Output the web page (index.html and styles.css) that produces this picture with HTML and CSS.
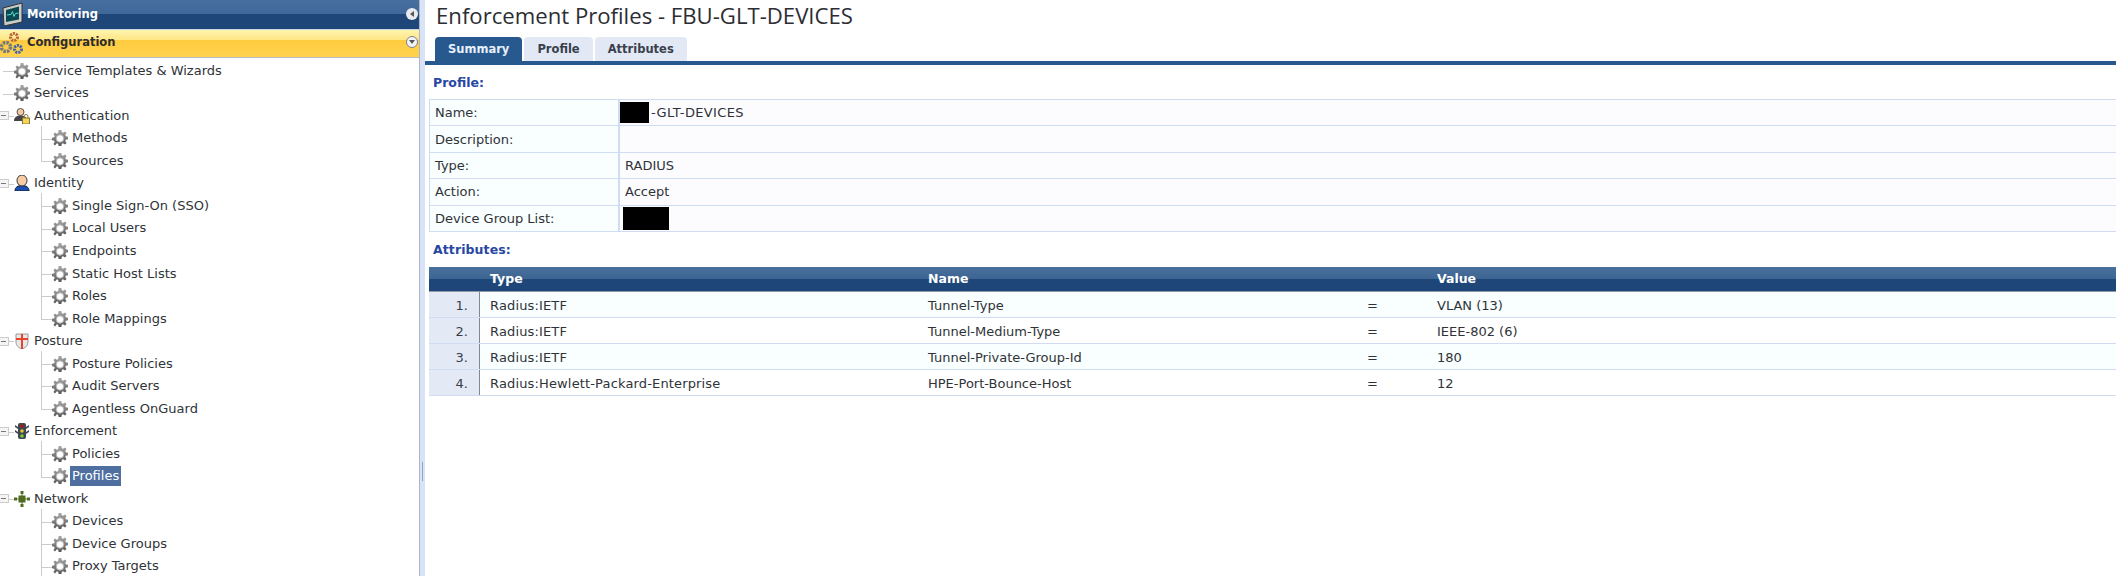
FILE: index.html
```html
<!DOCTYPE html>
<html lang="en">
<head>
<meta charset="utf-8">
<title>Enforcement Profiles</title>
<link rel="stylesheet" href="styles.css">
</head>
<body>
<svg class="defs" width="0" height="0">
  <defs>
    <linearGradient id="gearfill" x1="0" y1="0" x2="0" y2="1">
      <stop offset="0" stop-color="#a9a9a9"/>
      <stop offset="1" stop-color="#565656"/>
    </linearGradient>
    <symbol id="gear" viewBox="0 0 16 16">
      <path fill="url(#gearfill)" d="M6.600 0h2.800l.4 2.200 1.300.6L13 1.600l1.500 1.500-1.200 1.900.5 1.300 2.200.4v2.600l-2.200.4-.5 1.300 1.200 1.900-1.500 1.500-1.900-1.200-1.300.6-.4 2.100H6.600l-.4-2.100-1.300-.6L3 15.400l-1.500-1.500 1.200-1.900-.5-1.300L0 10.300V7.700l2.200-.4.5-1.300L1.500 4.100 3 2.600l1.900 1.200 1.300-.6z"/>
      <circle cx="8" cy="8.500" r="3.700" fill="#fff" stroke="#b5b5b5"/>
    </symbol>
  </defs>
</svg>
<div class="app">
  <aside class="sidebar">
    <div class="accordion monitoring">
      <svg class="acc-icon" width="22" height="24" viewBox="0 0 22 24"><path d="M1 6l19-5v19L2 24z" fill="#c9ccc9" stroke="#333"/><path d="M4 8l13-3.500v13L4 20z" fill="#0c4a52"/><path d="M5 13l4-.5 1.500-3 1.500 5 1.500-3 3-.5" fill="none" stroke="#4fe0d0"/></svg>
      <span class="acc-label">Monitoring</span>
      <span class="acc-toggle"><span class="arrow-left"></span></span>
    </div>
    <div class="accordion configuration">
      <svg class="acc-icon cfg" width="24" height="28" viewBox="0 0 24 28">
        <circle cx="14" cy="7" r="3.500" fill="none" stroke="#b8623a" stroke-width="3" stroke-dasharray="2 1"/>
        <circle cx="6" cy="17" r="4.500" fill="none" stroke="#77777c" stroke-width="3.500" stroke-dasharray="2.500 1"/>
        <circle cx="18" cy="19" r="3.500" fill="none" stroke="#3c62a8" stroke-width="3" stroke-dasharray="2 1"/>
      </svg>
      <span class="acc-label">Configuration</span>
      <span class="acc-toggle open"><span class="arrow-down"></span></span>
    </div>
    <ul class="tree">
      <li class="row top leaf"><svg class="ico"><use href="#gear"/></svg><span class="lbl">Service Templates &amp; Wizards</span></li>
      <li class="row top leaf"><svg class="ico"><use href="#gear"/></svg><span class="lbl">Services</span></li>
      <li class="row top"><span class="exp"></span><svg class="ico" viewBox="0 0 16 16"><circle cx="6.500" cy="4" r="3.500" fill="#f6c9a0" stroke="#555"/><path d="M0 13c0-4 3-5.500 6.500-5.500S13 9 13 13z" fill="#444"/><rect x="8.500" y="10" width="7" height="6" fill="#f3d55a" stroke="#8a7a30"/><path d="M10 10V8.500a2 2 0 0 1 4 0V10" fill="none" stroke="#8a7a30"/></svg><span class="lbl">Authentication</span></li>
      <li class="row child"><svg class="ico"><use href="#gear"/></svg><span class="lbl">Methods</span></li>
      <li class="row child last"><svg class="ico"><use href="#gear"/></svg><span class="lbl">Sources</span></li>
      <li class="row top"><span class="exp"></span><svg class="ico" viewBox="0 0 16 16"><path d="M1 16c0-4 3-5.500 7-5.500s7 1.500 7 5.500z" fill="#1d4fb0" stroke="#123"/><ellipse cx="8" cy="5.500" rx="5" ry="5.500" fill="#f8cda6" stroke="#333"/></svg><span class="lbl">Identity</span></li>
      <li class="row child"><svg class="ico"><use href="#gear"/></svg><span class="lbl">Single Sign-On (SSO)</span></li>
      <li class="row child"><svg class="ico"><use href="#gear"/></svg><span class="lbl">Local Users</span></li>
      <li class="row child"><svg class="ico"><use href="#gear"/></svg><span class="lbl">Endpoints</span></li>
      <li class="row child"><svg class="ico"><use href="#gear"/></svg><span class="lbl">Static Host Lists</span></li>
      <li class="row child"><svg class="ico"><use href="#gear"/></svg><span class="lbl">Roles</span></li>
      <li class="row child last"><svg class="ico"><use href="#gear"/></svg><span class="lbl">Role Mappings</span></li>
      <li class="row top"><span class="exp"></span><svg class="ico" viewBox="0 0 16 16"><path d="M2 1h12v8c0 4-3 6-6 7-3-1-6-3-6-7z" fill="#e8e8e8" stroke="#999"/><path d="M7 1h2v15H7zM2 5h12v2H2z" fill="#e6442c"/></svg><span class="lbl">Posture</span></li>
      <li class="row child"><svg class="ico"><use href="#gear"/></svg><span class="lbl">Posture Policies</span></li>
      <li class="row child"><svg class="ico"><use href="#gear"/></svg><span class="lbl">Audit Servers</span></li>
      <li class="row child last"><svg class="ico"><use href="#gear"/></svg><span class="lbl">Agentless OnGuard</span></li>
      <li class="row top"><span class="exp"></span><svg class="ico" viewBox="0 0 16 16"><path d="M1 2l3 2v2L1 4zM15 2l-3 2v2l3-2zM1 7l3 2v2L1 9zM15 7l-3 2v2l3-2z" fill="#445"/><rect x="4" y="0" width="8" height="16" rx="2" fill="#3b4a50"/><circle cx="8" cy="3" r="1.800" fill="#b01818"/><circle cx="8" cy="8" r="1.800" fill="#e8c828"/><circle cx="8" cy="13" r="1.800" fill="#7cc83c"/></svg><span class="lbl">Enforcement</span></li>
      <li class="row child"><svg class="ico"><use href="#gear"/></svg><span class="lbl">Policies</span></li>
      <li class="row child last"><svg class="ico"><use href="#gear"/></svg><span class="lbl selected">Profiles</span></li>
      <li class="row top"><span class="exp"></span><svg class="ico" viewBox="0 0 16 16"><path d="M0 8h16M8 0v16" stroke="#5a7a28" fill="none"/><rect x="4.500" y="4.500" width="7" height="7" fill="#4f6d22"/><rect x="0" y="6.500" width="3" height="3" fill="#4f6d22"/><rect x="13" y="6.500" width="3" height="3" fill="#4f6d22"/><rect x="6.500" y="0" width="3" height="3" fill="#4f6d22"/><rect x="6.500" y="13" width="3" height="3" fill="#4f6d22"/></svg><span class="lbl">Network</span></li>
      <li class="row child"><svg class="ico"><use href="#gear"/></svg><span class="lbl">Devices</span></li>
      <li class="row child"><svg class="ico"><use href="#gear"/></svg><span class="lbl">Device Groups</span></li>
      <li class="row child"><svg class="ico"><use href="#gear"/></svg><span class="lbl">Proxy Targets</span></li>
    </ul>
  </aside>
  <div class="splitter"><span class="grip"></span></div>
  <main class="content">
    <h1 class="title">Enforcement Profiles - FBU-GLT-DEVICES</h1>
    <nav class="tabs">
      <span class="tab active">Summary</span>
      <span class="tab">Profile</span>
      <span class="tab">Attributes</span>
    </nav>
    <h2 class="section first">Profile:</h2>
    <div class="summary">
      <div class="key">Name:</div><div class="val named"><span class="redact r-name"></span><span>-GLT-DEVICES</span></div>
      <div class="key">Description:</div><div class="val"></div>
      <div class="key">Type:</div><div class="val pad">RADIUS</div>
      <div class="key">Action:</div><div class="val pad">Accept</div>
      <div class="key">Device Group List:</div><div class="val"><span class="redact r-group"></span></div>
    </div>
    <h2 class="section second">Attributes:</h2>
    <div class="attrs">
      <div class="head"><span></span><span>Type</span><span>Name</span><span></span><span>Value</span></div>
      <div class="attr odd"><span class="num">1.</span><span>Radius:IETF</span><span>Tunnel-Type</span><span>=</span><span>VLAN (13)</span></div>
      <div class="attr"><span class="num">2.</span><span>Radius:IETF</span><span>Tunnel-Medium-Type</span><span>=</span><span>IEEE-802 (6)</span></div>
      <div class="attr odd"><span class="num">3.</span><span>Radius:IETF</span><span>Tunnel-Private-Group-Id</span><span>=</span><span>180</span></div>
      <div class="attr"><span class="num">4.</span><span>Radius:Hewlett-Packard-Enterprise</span><span>HPE-Port-Bounce-Host</span><span>=</span><span>12</span></div>
    </div>
  </main>
</div>
</body>
</html>
```
FILE: styles.css
```css
* { box-sizing: border-box; }
html, body { margin: 0; height: 100%; overflow: hidden; background: #fff; }
body { font-family: "DejaVu Sans", Verdana, sans-serif; font-size: 13px; color: #2f3338; }
.defs { display: block; height: 0; }
.app { display: flex; height: 576px; }

.sidebar { width: 420px; flex: none; border-right: 1px solid #aeb6c2; overflow: hidden; }
.accordion { display: flex; align-items: center; font-weight: bold; font-size: 11.500px; }
.acc-label { flex: 1; margin-left: 3px; }
.monitoring { height: 30px; color: #fff; padding: 0 1px 2px 2px; border-bottom: 1px solid #c9d3e2;
  background: linear-gradient(#47709f 0, #3f6899 14px, #1e4679 14px, #1e4679 100%); }
.configuration { height: 28px; color: #2b2b30; padding: 0 1px 3px 0; border-bottom: 1px solid #b9bcc4;
  background: linear-gradient(#fff4b0 0, #ffe683 10px, #ffcc3f 10px, #ffd24e 100%); }
.acc-icon.cfg { margin-top: 3px; }
.acc-toggle { width: 12px; height: 12px; border-radius: 50%; background: #e9eaee; display: flex; align-items: center; justify-content: center; }
.acc-toggle.open { background: #f4f4f6; border: 1px solid #7a8292; }
.arrow-left { border: 3px solid transparent; border-right: 4px solid #555; border-left: 0; }
.arrow-down { border: 3px solid transparent; border-top: 4px solid #555; border-bottom: 0; }

.tree { list-style: none; margin: 0; padding: 0; }
.row { height: 22.540px; display: flex; align-items: center; white-space: nowrap; }
.ico { width: 16px; height: 16px; flex: none; margin-top: 3px; }
.lbl { margin-left: 2px; padding: 0 2px; position: relative; top: 1px; }
.top { padding-left: 14px; background: linear-gradient(#ccc, #ccc) 3px 13px / 11px 1px no-repeat; }
.exp { width: 9px; height: 9px; margin-left: -14px; margin-right: 5px; margin-top: 3px; flex: none; border: 1px solid #ccc; border-left: 0; background: linear-gradient(#777, #777) 1px 3px / 5px 1px no-repeat, #f5f5f5; }
.child { padding-left: 52px; background: linear-gradient(#ccc, #ccc) 41px 0 / 1px 100% no-repeat, linear-gradient(#ccc, #ccc) 41px 13px / 11px 1px no-repeat; }
.child.last { background: linear-gradient(#ccc, #ccc) 41px 0 / 1px 13px no-repeat, linear-gradient(#ccc, #ccc) 41px 13px / 11px 1px no-repeat; }
.selected { background: #4e6fa0; color: #fff; height: 20px; line-height: 20px; }

.splitter { width: 5px; flex: none; background: #d8e3f7; display: flex; align-items: flex-start; justify-content: center; padding-top: 462px; }
.grip { width: 1px; height: 19px; background: #8ea4c8; }

.content { flex: 1; min-width: 0; display: flex; flex-direction: column; }
.title { margin: 0 0 0 11px; font-family: "Open Sans", sans-serif; font-weight: 400; font-size: 22.150px; line-height: 30px; height: 37px; color: #2c2e33; white-space: nowrap; }
.tabs { display: flex; gap: 2px; padding-left: 10px; height: 28px; border-bottom: 4px solid #27598f; flex: none; }
.tab { display: flex; align-items: center; justify-content: center; padding: 0 13px; height: 24px; background: #e2e9f4; color: #3a3f4c; font-weight: bold; font-size: 11.500px; border-radius: 4px 4px 0 0; }
.tab.active { background: #27598f; color: #e8f0fa; }
.section { margin: 0; padding-left: 8px; font-size: 12.500px; font-weight: bold; color: #2747a3; line-height: 34px; height: 34px; }
.section.first { padding-top: 1px; }
.section.second { line-height: 36px; letter-spacing: 0.100px; }
.summary { display: grid; grid-template-columns: 190px 1fr; margin-left: 4px; border-top: 1px solid #cfdcf2; flex: none; }
.key, .val { height: 26.400px; display: flex; align-items: center; border-bottom: 1px solid #cfdcf2; white-space: nowrap; }
.key { background: #f9fefe; padding-left: 5px; border-left: 1px solid #cfdcf2; border-right: 1px solid #cfdcf2; }
.val { background: #fcfcff; padding-left: 0; border-left: 1px solid #cfdcf2; }
.val.pad { padding-left: 5px; }
.named span:last-child { margin-left: 2px; letter-spacing: 0.350px; }
.redact { display: block; background: #000; }
.r-name { width: 29px; height: 21px; }
.r-group { width: 46px; height: 23px; margin-left: 3px; }

.attrs { margin-left: 4px; margin-top: 1px; flex: none; }
.head, .attr { display: grid; grid-template-columns: 51px 438px 439px 70px 1fr; white-space: nowrap; }
.head { height: 25px; font-weight: bold; font-size: 12.500px; color: #fff; align-items: center; border-bottom: 1px solid #8d97a6;
  background: linear-gradient(#4a709e 0, #3d6591 12px, #1e4679 12px, #1e4679 100%); }
.attr { height: 26px; align-items: center; border-bottom: 1px solid #cfdcf2; background: #fff; padding-top: 2px; }
.attr.odd { background: #f9fefe; }
.head span, .attr span { padding-left: 10px; }
.attr span:nth-child(2) { letter-spacing: 0.150px; }
.head span:first-child { padding: 0; }
.attr .num { height: calc(100% + 2px); margin-top: -2px; display: flex; align-items: center; justify-content: flex-end; padding: 2px 11px 0 0; background: #e3e9f5; border-right: 1px solid #7f8790; color: #3a3f45; }
```
